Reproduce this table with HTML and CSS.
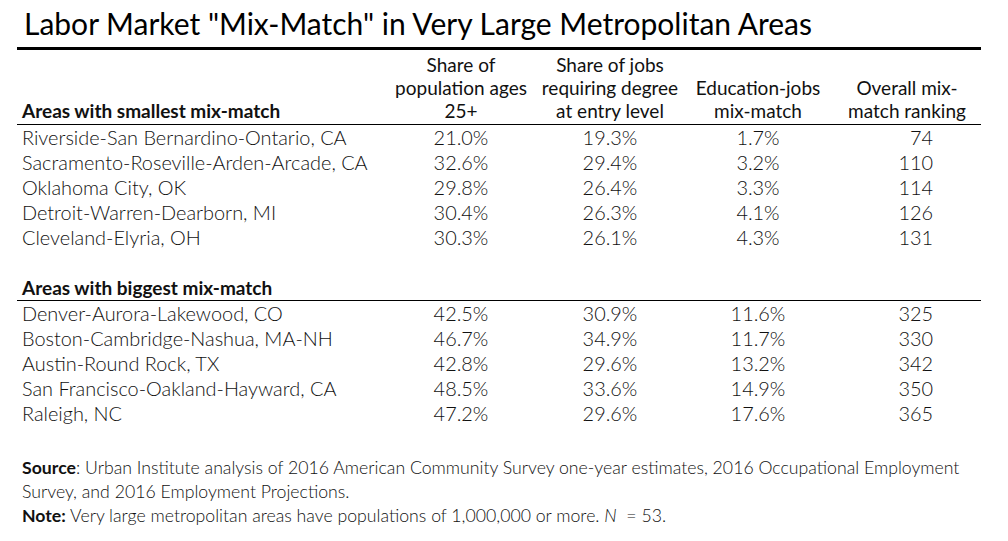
FILE: index.html
```html
<!DOCTYPE html>
<html lang="en">
<head>
<meta charset="utf-8">
<title>Labor Market "Mix-Match"</title>
<link rel="stylesheet" href="styles.css">
</head>
<body>
<div class="page">
  <h1 class="title">Labor Market "Mix-Match" in Very Large Metropolitan Areas</h1>
  <table class="data">
    <colgroup>
      <col class="c-name"><col class="c-1"><col class="c-2"><col class="c-3"><col class="c-4">
    </colgroup>
    <thead>
      <tr class="head">
        <th class="group">Areas with smallest mix-match</th>
        <th>Share of<br>population ages<br>25+</th>
        <th>Share of jobs<br>requiring degree<br>at entry level</th>
        <th>Education-jobs<br>mix-match</th>
        <th>Overall mix-<br>match ranking</th>
      </tr>
    </thead>
    <tbody>
      <tr><td>Riverside-San Bernardino-Ontario, CA</td><td>21.0%</td><td>19.3%</td><td>1.7%</td><td class="rank">74</td></tr>
      <tr><td>Sacramento-Roseville-Arden-Arcade, CA</td><td>32.6%</td><td>29.4%</td><td>3.2%</td><td class="rank">110</td></tr>
      <tr><td>Oklahoma City, OK</td><td>29.8%</td><td>26.4%</td><td>3.3%</td><td class="rank">114</td></tr>
      <tr><td>Detroit-Warren-Dearborn, MI</td><td>30.4%</td><td>26.3%</td><td>4.1%</td><td class="rank">126</td></tr>
      <tr><td>Cleveland-Elyria, OH</td><td>30.3%</td><td>26.1%</td><td>4.3%</td><td class="rank">131</td></tr>
      <tr class="blank"><td colspan="5"></td></tr>
      <tr class="subhead"><th class="group" colspan="5">Areas with biggest mix-match</th></tr>
      <tr><td>Denver-Aurora-Lakewood, CO</td><td>42.5%</td><td>30.9%</td><td>11.6%</td><td class="rank">325</td></tr>
      <tr><td>Boston-Cambridge-Nashua, MA-NH</td><td>46.7%</td><td>34.9%</td><td>11.7%</td><td class="rank">330</td></tr>
      <tr><td>Austin-Round Rock, TX</td><td>42.8%</td><td>29.6%</td><td>13.2%</td><td class="rank">342</td></tr>
      <tr><td>San Francisco-Oakland-Hayward, CA</td><td>48.5%</td><td>33.6%</td><td>14.9%</td><td class="rank">350</td></tr>
      <tr><td>Raleigh, NC</td><td>47.2%</td><td>29.6%</td><td>17.6%</td><td class="rank">365</td></tr>
    </tbody>
  </table>
  <div class="notes">
    <p><strong>Source</strong>: Urban Institute analysis of 2016 American Community Survey one-year estimates, 2016 Occupational Employment Survey, and 2016 Employment Projections.</p>
    <p><strong>Note:</strong> Very large metropolitan areas have populations of 1,000,000 or more. <em>N</em> &nbsp;= 53.</p>
  </div>
</div>
</body>
</html>
```
FILE: styles.css
```css
* { box-sizing: border-box; }
html, body { margin: 0; padding: 0; background: #fff; }
body {
  font-family: Lato, "Open Sans", sans-serif;
  color: #111;
  width: 1008px;
  height: 541px;
  overflow: hidden;
}
.page {
  padding: 0 27px 0 17px;
}
.title {
  margin: 0;
  padding: 6px 0 7px 7px;
  font-size: 30px;
  font-weight: 400;
  line-height: 34px;
  color: #000;
  border-bottom: 3px solid #000;
}
.data {
  width: 964px;
  border-collapse: collapse;
  table-layout: fixed;
  font-size: 19.9px;
}
.c-name { width: 368px; }
.c-1 { width: 152px; }
.c-2 { width: 146px; }
.c-3 { width: 150px; }
.c-4 { width: 148px; }
.data th, .data td {
  padding: 0;
  font-weight: 300;
}
.head th {
  font-size: 19px;
  font-weight: 400;
  line-height: 23px;
  text-align: center;
  vertical-align: bottom;
  padding: 3px 0 2px;
  border-bottom: 1px solid #000;
}
.head th.group, .subhead th.group {
  font-size: 19px;
  text-align: left;
  font-weight: 700;
  padding-left: 5px;
}
.subhead th {
  height: 25px;
  line-height: 25px;
  vertical-align: bottom;
  border-bottom: 1px solid #000;
}
.data tbody td {
  height: 25px;
  line-height: 25px;
  text-align: center;
}
.data tbody td:first-child {
  text-align: left;
  padding-left: 5px;
}
.data tbody td.rank {
  text-align: right;
  padding-right: 48px;
}
.notes {
  margin-top: 30px;
  padding-left: 5px;
  font-size: 17.7px;
  font-weight: 300;
  line-height: 24px;
}
.notes p { margin: 0; }
.notes strong { font-weight: 700; }
```
